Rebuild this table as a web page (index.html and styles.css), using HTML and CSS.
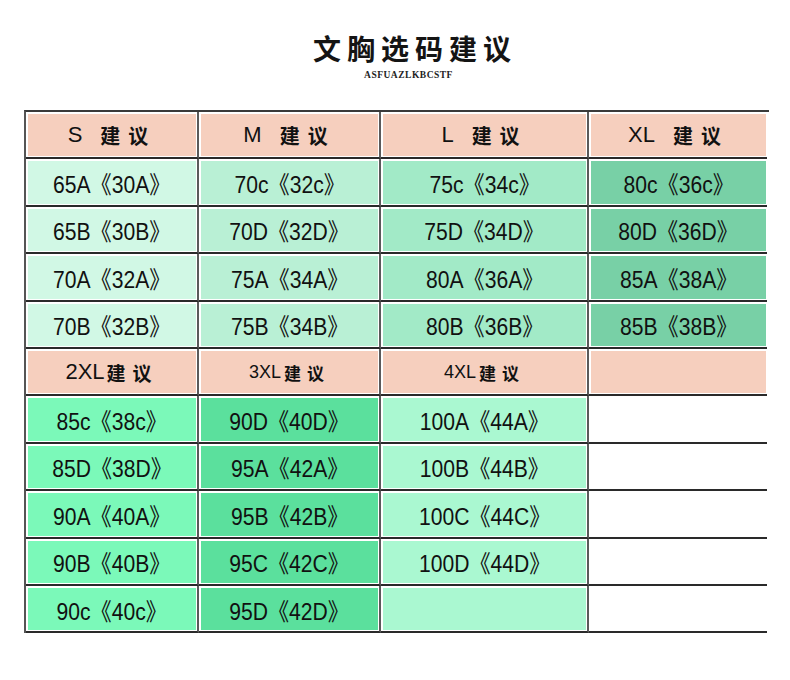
FILE: index.html
```html
<!DOCTYPE html>
<html lang="zh">
<head>
<meta charset="utf-8">
<title>文胸选码建议</title>
<link rel="stylesheet" href="styles.css">
</head>
<body>
<div class="page">
  <header class="head">
    <h1 class="title">文胸选码建议</h1>
    <div class="sub">ASFUAZLKBCSTF</div>
  </header>
  <div class="sheet">
    <div class="cell h h1">S<span class="zh">建议</span></div>
    <div class="cell h h1">M<span class="zh">建议</span></div>
    <div class="cell h h1">L<span class="zh">建议</span></div>
    <div class="cell h h1 last">XL<span class="zh">建议</span></div>

    <div class="cell c1"><span class="v">65A《30A》</span></div>
    <div class="cell c2"><span class="v">70c《32c》</span></div>
    <div class="cell c3"><span class="v">75c《34c》</span></div>
    <div class="cell c4 last"><span class="v">80c《36c》</span></div>

    <div class="cell c1"><span class="v">65B《30B》</span></div>
    <div class="cell c2"><span class="v">70D《32D》</span></div>
    <div class="cell c3"><span class="v">75D《34D》</span></div>
    <div class="cell c4 last"><span class="v">80D《36D》</span></div>

    <div class="cell c1"><span class="v">70A《32A》</span></div>
    <div class="cell c2"><span class="v">75A《34A》</span></div>
    <div class="cell c3"><span class="v">80A《36A》</span></div>
    <div class="cell c4 last"><span class="v">85A《38A》</span></div>

    <div class="cell c1"><span class="v">70B《32B》</span></div>
    <div class="cell c2"><span class="v">75B《34B》</span></div>
    <div class="cell c3"><span class="v">80B《36B》</span></div>
    <div class="cell c4 last"><span class="v">85B《38B》</span></div>

    <div class="cell h h2">2XL<span class="zh">建议</span></div>
    <div class="cell h h3">3XL<span class="zh">建议</span></div>
    <div class="cell h h3">4XL<span class="zh">建议</span></div>
    <div class="cell h last"></div>

    <div class="cell d1"><span class="v">85c《38c》</span></div>
    <div class="cell d2"><span class="v">90D《40D》</span></div>
    <div class="cell d3"><span class="v">100A《44A》</span></div>
    <div class="cell last"></div>

    <div class="cell d1"><span class="v">85D《38D》</span></div>
    <div class="cell d2"><span class="v">95A《42A》</span></div>
    <div class="cell d3"><span class="v">100B《44B》</span></div>
    <div class="cell last"></div>

    <div class="cell d1"><span class="v">90A《40A》</span></div>
    <div class="cell d2"><span class="v">95B《42B》</span></div>
    <div class="cell d3"><span class="v">100C《44C》</span></div>
    <div class="cell last"></div>

    <div class="cell d1"><span class="v">90B《40B》</span></div>
    <div class="cell d2"><span class="v">95C《42C》</span></div>
    <div class="cell d3"><span class="v">100D《44D》</span></div>
    <div class="cell last"></div>

    <div class="cell d1"><span class="v">90c《40c》</span></div>
    <div class="cell d2"><span class="v">95D《42D》</span></div>
    <div class="cell d3"></div>
    <div class="cell last"></div>
  </div>
</div>
</body>
</html>
```

FILE: styles.css
```css
html, body {
  margin: 0;
  padding: 0;
  background: #ffffff;
}

.page {
  width: 790px;
  height: 680px;
  padding-top: 33px;
  box-sizing: border-box;
  font-family: "Liberation Sans", "Noto Sans CJK SC", sans-serif;
  color: #111111;
}

.head {
  display: flex;
  flex-direction: column;
  align-items: center;
}

.title {
  margin: 0;
  padding-left: 40px;
  font-family: "Noto Sans CJK SC", sans-serif;
  font-weight: 700;
  font-size: 28px;
  line-height: 30px;
  letter-spacing: 6px;
  color: #141414;
}

.sub {
  margin-top: 7px;
  padding-left: 27px;
  font-family: "Liberation Serif", serif;
  font-weight: 700;
  font-size: 9.5px;
  line-height: 10px;
  letter-spacing: 0.5px;
  color: #222222;
}

.sheet {
  margin-top: 30px;
  margin-left: 24px;
  width: 743px;
  display: grid;
  grid-template-columns: 173px 182px 208px 178px;
  grid-template-rows: repeat(11, 47.4px);
  border-left: 2px solid #555555;
  border-top: 2px solid #3a3a3a;
}

.cell {
  display: flex;
  align-items: center;
  justify-content: center;
  padding: 2px 1px 1px 2px;
  background-clip: content-box;
  background-color: #ffffff;
  border-right: 2px solid #5a5a5a;
  border-bottom: 2px solid #2a2a2a;
  font-size: 22px;
  white-space: nowrap;
}

.cell.last {
  border-right: none;
}

.v {
  display: inline-block;
  font-size: 24px;
  transform: scaleX(0.88);
}

.h {
  background-color: #f6cfbe;
}

.h1 {
  font-size: 22px;
}

.h1 .zh {
  font-size: 20px;
  margin-left: 18px;
  letter-spacing: 8px;
}

.h2 {
  font-size: 22px;
}

.h2 .zh {
  font-size: 19px;
  margin-left: 2px;
  letter-spacing: 7px;
}

.h3 {
  font-size: 18px;
}

.h3 .zh {
  font-size: 17px;
  margin-left: 3px;
  letter-spacing: 6px;
}

.zh {
  font-family: "Noto Sans CJK SC", sans-serif;
  font-weight: 700;
}

.c1 { background-color: #d1f8e5; }
.c2 { background-color: #b9f0d5; }
.c3 { background-color: #a2eac7; }
.c4 { background-color: #78d0a6; }

.d1 { background-color: #7bf9b9; }
.d2 { background-color: #5be09d; }
.d3 { background-color: #aaf8d1; }
```
